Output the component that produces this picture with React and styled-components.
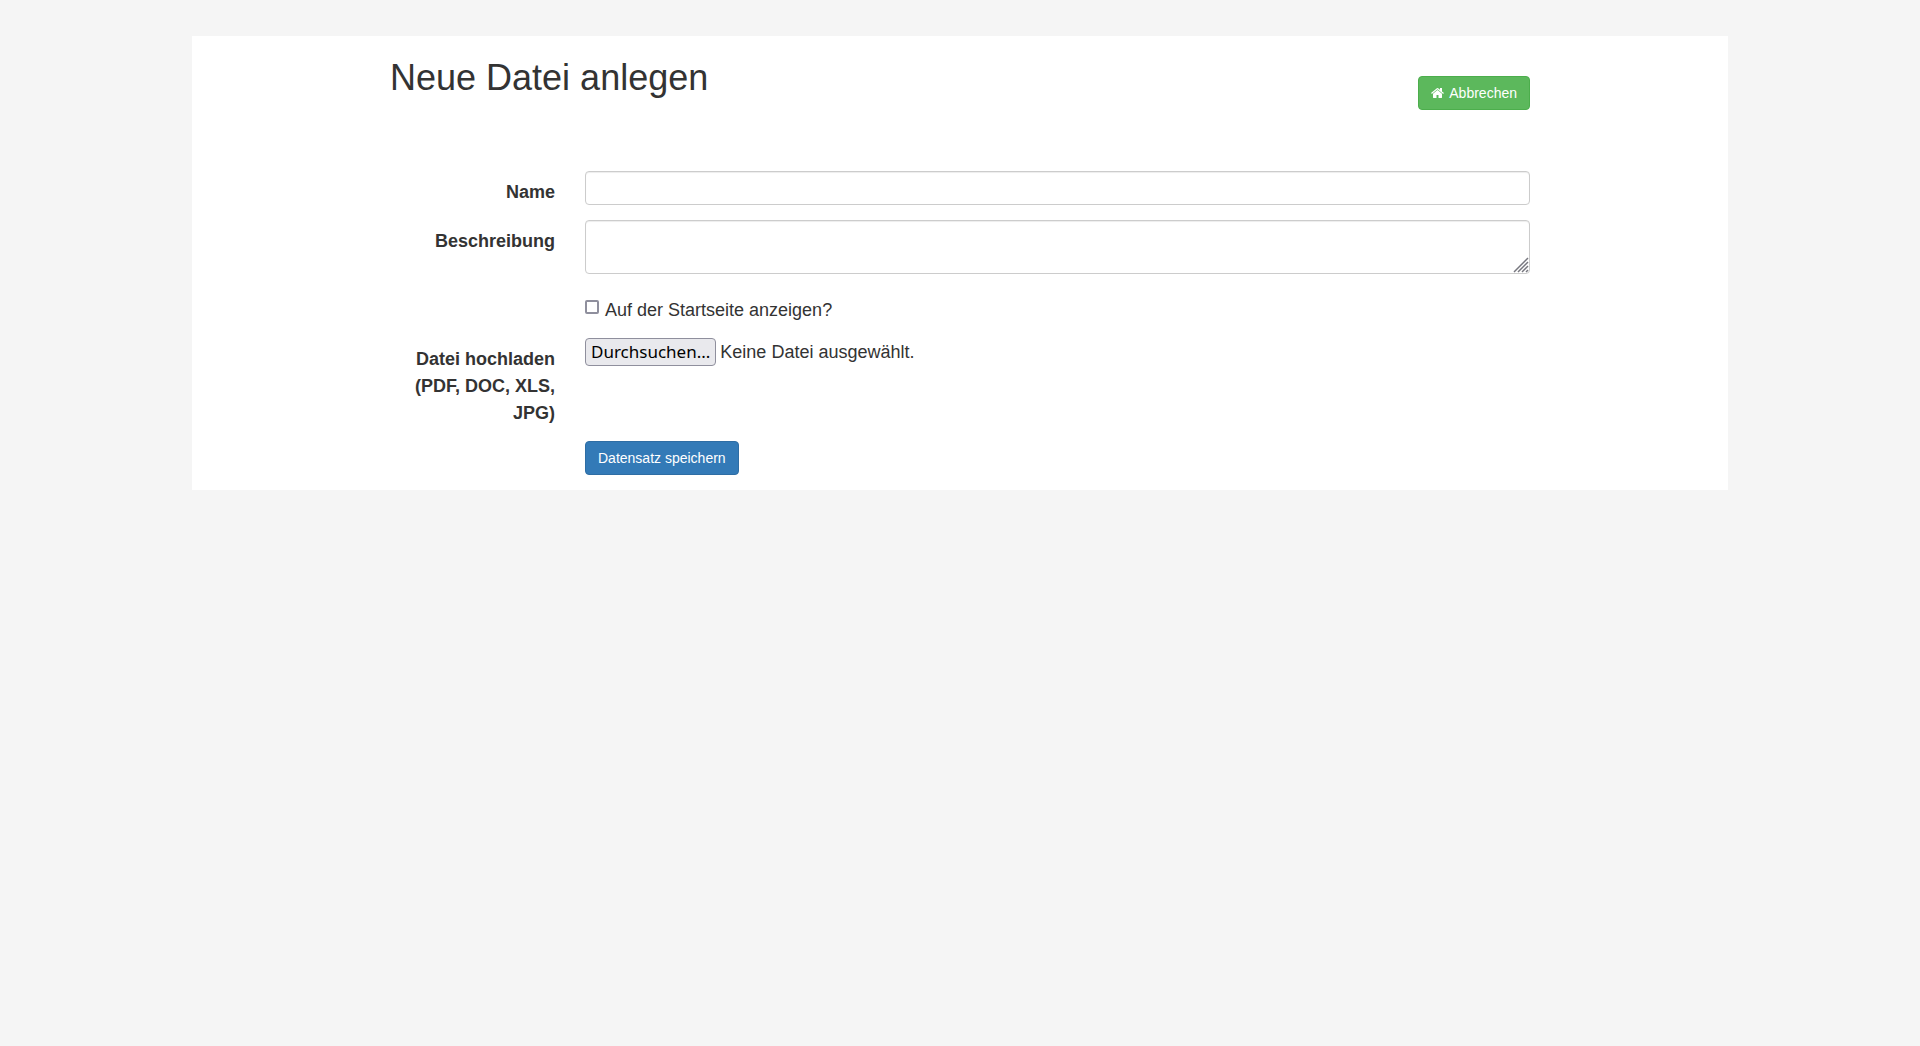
import React, { useState } from 'react';
import styled, { createGlobalStyle } from 'styled-components';

const GlobalStyle = createGlobalStyle`
  *, *::before, *::after { box-sizing: border-box; }
  body {
    margin: 0;
    background: #f5f5f5;
    color: #333;
    font-family: "Liberation Sans", Arial, sans-serif;
    font-size: 18px;
    line-height: 27px;
  }
`;

const Page = styled.main`
  width: 80%;
  margin: 36px auto 0;
  background: #fff;
`;

const Container = styled.div`
  max-width: 1170px;
  margin: 0 auto;
  padding: 0 15px;
`;

const Header = styled.header`
  display: flex;
  justify-content: space-between;
  align-items: flex-start;
  padding: 20px 0 61px;
`;

const Title = styled.h1`
  margin: 0;
  font-size: 36px;
  line-height: 44px;
  font-weight: 500;
`;

const buttonColors = {
  success: { fill: '#5cb85c', edge: '#4cae4c' },
  primary: { fill: '#337ab7', edge: '#2e6da4' },
};

const Button = styled.button`
  display: inline-flex;
  align-items: center;
  gap: 4px;
  height: 34px;
  padding: 0 12px;
  border: 1px solid ${(p) => buttonColors[p.$variant].edge};
  border-radius: 4px;
  background: ${(p) => buttonColors[p.$variant].fill};
  color: #fff;
  font: 14px/20px "Liberation Sans", Arial, sans-serif;
  text-decoration: none;
  cursor: pointer;
`;

const HeaderActions = styled.div`
  display: flex;
  padding-top: 20px;
`;

const Row = styled.div`
  display: grid;
  grid-template-columns: minmax(0, 2fr) minmax(0, 10fr);
  margin: 0 -15px;
  padding-bottom: 15px;
`;

const RowLabel = styled.label`
  margin-bottom: -1px;
  padding: 8px 15px 0;
  font-weight: 700;
  text-align: right;
`;

const Field = styled.div`
  grid-column: 2;
  display: flex;
  align-items: flex-start;
  padding: 0 15px;
`;

const TextInput = styled.input`
  width: 100%;
  height: 34px;
  padding: 6px 12px;
  border: 1px solid #ccc;
  border-radius: 4px;
  background: #fff;
  box-shadow: inset 0 1px 1px rgba(0, 0, 0, 0.075);
  color: #555;
  font: 14px/20px "Liberation Sans", Arial, sans-serif;
`;

const TextArea = styled(TextInput)`
  display: block;
  height: 54px;
  resize: none;
`;

const AreaWrap = styled.div`
  position: relative;
  flex: 1;
`;

const Grip = styled.svg`
  position: absolute;
  right: 1px;
  bottom: 1px;
  pointer-events: none;
`;

const CheckLabel = styled.label`
  display: flex;
  align-items: flex-start;
  gap: 6px;
  margin-bottom: -1px;
  padding-top: 8px;
`;

const Checkbox = styled.input`
  appearance: none;
  width: 14px;
  height: 14px;
  margin: 3px 0 0;
  border: 2px solid #8f8f9d;
  border-radius: 2px;
  background: #fff;
  &:checked { background: #0060df; }
`;

const FilePicker = styled.div`
  position: relative;
  display: flex;
  align-items: center;
  gap: 4px;
`;

const FileInput = styled.input`
  position: absolute;
  inset: 0;
  width: 100%;
  opacity: 0;
  cursor: pointer;
`;

const FileButton = styled.span`
  padding: 0 5px;
  border: 1px solid #8f8f9d;
  border-radius: 4px;
  background: #e9e9ed;
  color: #000;
  font: 17px/26px "Noto Sans", sans-serif;
`;

const FileName = styled.span`
  line-height: 28px;
`;

function HomeIcon() {
  return (
    <svg width="14" height="14" viewBox="64 0 1792 1792" fill="currentColor" aria-hidden="true">
      <path d="M1472 992v480q0 26-19 45t-45 19h-384v-384H768v384H384q-26 0-45-19t-19-45V992q0-1 .5-3t.5-3l575-474 575 474q1 2 1 6zm223-69l-62 74q-8 9-21 11h-3q-13 0-21-7L896 424 204 1001q-12 8-24 7-13-2-21-11l-62-74q-8-10-7-23.500t11-21.500l719-599q32-26 76-26t76 26l244 204V288q0-14 9-23t23-9h192q14 0 23 9t9 23v408l219 182q10 8 11 21.500t-7 23.500z" />
    </svg>
  );
}

export default function App() {
  const [fileName, setFileName] = useState('');
  return (
    <>
      <GlobalStyle />
      <Page>
        <Container>
          <Header>
            <Title>Neue Datei anlegen</Title>
            <HeaderActions>
              <Button as="a" href="#" $variant="success">
                <HomeIcon />
                Abbrechen
              </Button>
            </HeaderActions>
          </Header>
          <form onSubmit={(e) => e.preventDefault()}>
            <Row>
              <RowLabel htmlFor="name">Name</RowLabel>
              <Field>
                <TextInput id="name" type="text" />
              </Field>
            </Row>
            <Row>
              <RowLabel htmlFor="description">Beschreibung</RowLabel>
              <Field>
                <AreaWrap>
                  <TextArea as="textarea" id="description" />
                  <Grip width="16" height="16" viewBox="0 0 16 16" stroke="#77777f" strokeWidth="1.5" aria-hidden="true">
                    <path d="M1 15 15 1M5 15 15 5M9 15 15 9M13 15 15 13" />
                  </Grip>
                </AreaWrap>
              </Field>
            </Row>
            <Row>
              <Field>
                <CheckLabel>
                  <Checkbox type="checkbox" />
                  Auf der Startseite anzeigen?
                </CheckLabel>
              </Field>
            </Row>
            <Row>
              <RowLabel htmlFor="upload">Datei hochladen (PDF, DOC, XLS, JPG)</RowLabel>
              <Field>
                <FilePicker>
                  <FileButton aria-hidden="true">Durchsuchen...</FileButton>
                  <FileName>{fileName || 'Keine Datei ausgewählt.'}</FileName>
                  <FileInput
                    id="upload"
                    type="file"
                    onChange={(e) => setFileName(e.target.files[0]?.name ?? '')}
                  />
                </FilePicker>
              </Field>
            </Row>
            <Row>
              <Field>
                <Button type="submit" $variant="primary">Datensatz speichern</Button>
              </Field>
            </Row>
          </form>
        </Container>
      </Page>
    </>
  );
}
